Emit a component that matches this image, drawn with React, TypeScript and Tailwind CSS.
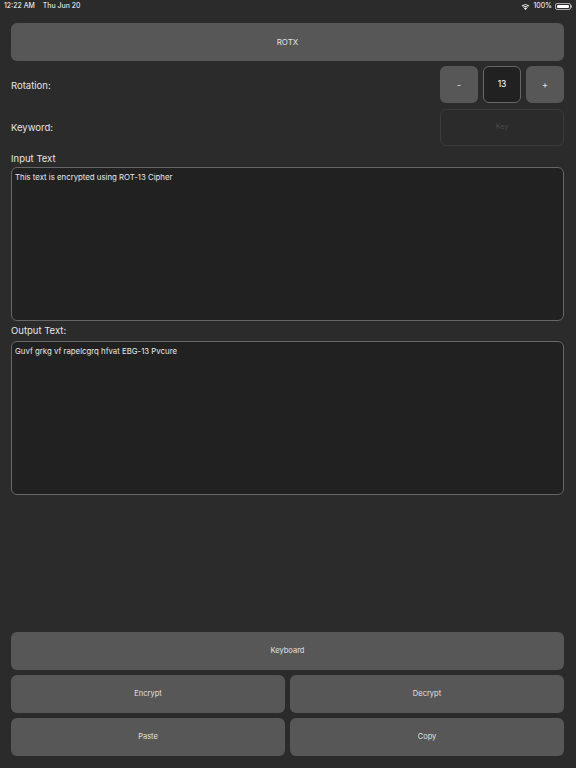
export default function App() {
  const font = { fontFamily: '"Inter", "Liberation Sans", sans-serif' };
  return (
    <div className="w-[576px] h-[768px] bg-[#2b2b2b] text-[#e5e5e5] flex flex-col overflow-hidden" style={font}>
      {/* Status bar */}
      <div className="h-[12px] flex items-center justify-between px-[4px] text-[7px] text-white">
        <div className="flex gap-[8px]">
          <span>12:22 AM</span>
          <span>Thu Jun 20</span>
        </div>
        <div className="flex items-center gap-[3px]">
          <svg width="9" height="7" viewBox="0 0 12 9" fill="white">
            <path d="M6 9 L4 6.8 A3 3 0 0 1 8 6.8 Z" />
            <path d="M2.6 5.3 A5 5 0 0 1 9.4 5.3 L8.6 6.1 A4 4 0 0 0 3.4 6.1 Z" />
            <path d="M0.8 3.5 A7.5 7.5 0 0 1 11.2 3.5 L10.3 4.4 A6.3 6.3 0 0 0 1.7 4.4 Z" />
          </svg>
          <span>100%</span>
          <div className="flex items-center">
            <div className="w-[16px] h-[7px] rounded-[2px] border border-white/60 p-[1px]">
              <div className="w-full h-full bg-white rounded-[1px]" />
            </div>
            <div className="w-[1px] h-[3px] bg-white/60 rounded-r" />
          </div>
        </div>
      </div>

      <div className="flex-1 flex flex-col pl-[11px] pr-[12px] pt-[11px] pb-[12px]">
        <button className="h-[38px] w-full rounded-[6px] bg-[#575757] text-[8px] text-[#e0e0e0]">ROTX</button>

        <div className="flex items-center justify-between mt-[5px] h-[37px]">
          <span className="pt-[3px] text-[9.5px] text-[#e5e5e5]">Rotation:</span>
          <div className="flex gap-[5px]">
            <button className="w-[38px] h-[37px] rounded-[6px] bg-[#575757] text-[9px]">-</button>
            <div className="w-[38px] h-[37px] rounded-[6px] bg-[#212121] border border-[#666] flex items-center justify-center text-[8.5px] text-white">13</div>
            <button className="w-[38px] h-[37px] rounded-[6px] bg-[#575757] text-[9px]">+</button>
          </div>
        </div>

        <div className="flex items-center justify-between mt-[6px] h-[37px]">
          <span className="pt-[2px] text-[9.5px] text-[#e5e5e5]">Keyword:</span>
          <div className="w-[124px] h-[37px] rounded-[6px] border border-[#3a3a3a] flex items-center justify-center text-[7px] text-[#4a4a4a]">Key</div>
        </div>

        <div className="text-[9.5px] mt-[4px] h-[17px] leading-[17px]">Input Text</div>
        <div className="h-[154px] rounded-[6px] bg-[#212121] border border-[#666] px-[3px] py-[4px] text-[7.8px] text-[#e8e8e8]">
          This text is encrypted using ROT-13 Cipher
        </div>

        <div className="text-[9.5px] mt-[1px] h-[17px] leading-[17px]">Output Text:</div>
        <div className="mt-[2px] h-[154px] rounded-[6px] bg-[#212121] border border-[#666] px-[3px] py-[4px] text-[7.8px] text-[#e8e8e8]">
          Guvf grkg vf rapelcgrq hfvat EBG-13 Pvcure
        </div>

        <div className="flex-1" />

        <div className="flex flex-col gap-[5px]">
          <button className="h-[38px] w-full rounded-[6px] bg-[#575757] text-[7.5px] text-[#e0e0e0]">Keyboard</button>
          <div className="grid grid-cols-2 gap-[5px]">
            <button className="h-[38px] rounded-[6px] bg-[#575757] text-[7.5px] text-[#e0e0e0]">Encrypt</button>
            <button className="h-[38px] rounded-[6px] bg-[#575757] text-[7.5px] text-[#e0e0e0]">Decrypt</button>
          </div>
          <div className="grid grid-cols-2 gap-[5px]">
            <button className="h-[38px] rounded-[6px] bg-[#575757] text-[7.5px] text-[#e0e0e0]">Paste</button>
            <button className="h-[38px] rounded-[6px] bg-[#575757] text-[7.5px] text-[#e0e0e0]">Copy</button>
          </div>
        </div>
      </div>
    </div>
  );
}
